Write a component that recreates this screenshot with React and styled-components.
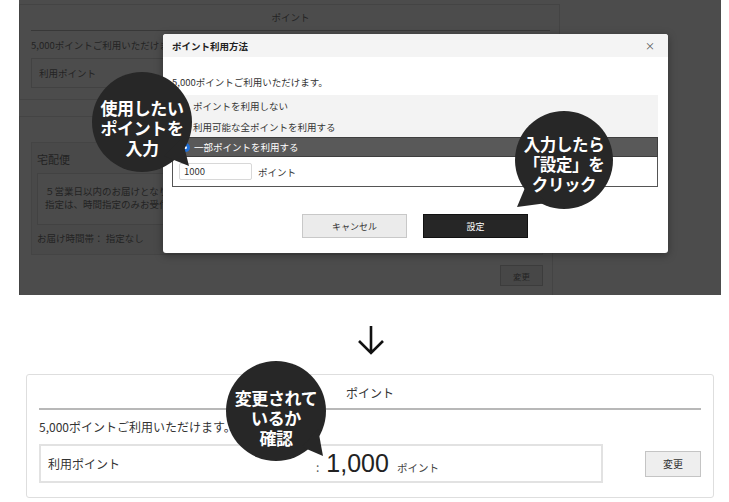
import React from 'react';
import styled, { createGlobalStyle } from 'styled-components';

const GlobalStyle = createGlobalStyle`
  body {
    margin: 0;
    background: #fff;
    font-family: "Noto Sans CJK JP", "Noto Sans", sans-serif;
  }
`;

const Page = styled.div`
  position: relative;
  width: 729px;
  height: 502px;
  overflow: hidden;
  display: flex;
  flex-direction: column;
`;

// ** dimmed screenshot start **
const Shot = styled.div`
  position: relative;
  margin-left: 19px;
  width: 702px;
  height: 295px;
  overflow: hidden;
  background: #fff;
`;

const UnderPage = styled.div`
  display: flex;
  flex-direction: column;
  width: 541px;
  padding-top: 4px;
  color: #777;
  font-size: 9.5px;
`;

const UnderCard = styled.div`
  box-sizing: border-box;
  width: ${(p) => p.$width}px;
  height: ${(p) => p.$height}px;
  margin-top: ${(p) => p.$top}px;
  border: 1px solid #e4e4e4;
  padding: 0 9px 0 11px;
  display: flex;
  flex-direction: column;
`;

const UnderHeading = styled.div`
  height: 25px;
  line-height: 25px;
  text-align: center;
  border-bottom: 1px solid #bdbdbd;
`;

const UnderText = styled.div`
  margin-top: 7px;
  line-height: 14px;
`;

const UnderField = styled.div`
  box-sizing: border-box;
  margin-top: 6px;
  width: 430px;
  height: 30px;
  border: 1px solid #dcdcdc;
  padding-left: 7px;
  display: flex;
  align-items: center;
`;

const DeliveryBox = styled.div`
  box-sizing: border-box;
  margin-top: 25px;
  height: 113px;
  background: #f6f6f6;
  border: 1px solid #e4e4e4;
  padding: 7px 5px 0;
  display: flex;
  flex-direction: column;
`;

const DeliveryTitle = styled.div`
  font-size: 11px;
  line-height: 18px;
`;

const DeliveryNote = styled.div`
  box-sizing: border-box;
  margin-top: 5px;
  height: 52px;
  border: 1px solid #dedede;
  background: #fbfbfb;
  padding: 11px 7px 0;
  line-height: 12.5px;
`;

const DeliveryTime = styled.div`
  margin-top: 6px;
  line-height: 14px;
`;

const UnderButtonRow = styled.div`
  display: flex;
  justify-content: flex-end;
  margin-top: 10px;
`;

const UnderButton = styled.div`
  box-sizing: border-box;
  width: 43px;
  height: 21px;
  border: 1px solid #c8c8c8;
  background: #eee;
  font-size: 8.5px;
  display: grid;
  place-items: center;
`;

const Dim = styled.div`
  position: absolute;
  inset: 0;
  background: rgba(0, 0, 0, 0.7);
`;
// ** dimmed screenshot end **

// ** modal start **
const Modal = styled.div`
  position: absolute;
  left: 144px;
  top: 34px;
  width: 505px;
  height: 219px;
  background: #fff;
  border-radius: 3px;
  box-shadow: 0 2px 8px rgba(0, 0, 0, 0.35);
  font-size: 9.5px;
  color: #333;
  display: flex;
  flex-direction: column;
`;

const ModalHeader = styled.div`
  height: 23px;
  background: #f4f4f4;
  border-radius: 3px 3px 0 0;
  padding: 0 13px 0 9px;
  display: flex;
  align-items: center;
  justify-content: space-between;
  font-weight: 700;
  color: #222;
`;

const Close = styled.span`
  font-weight: 400;
  font-size: 10px;
  color: #555;
`;

const ModalBody = styled.div`
  padding: 18px 10px 0 9px;
  display: flex;
  flex-direction: column;
`;

const ModalText = styled.div`
  line-height: 14px;
`;

const Options = styled.div`
  margin-top: 6px;
  background: #f3f3f3;
  display: flex;
  flex-direction: column;
`;

const Option = styled.div`
  box-sizing: border-box;
  height: ${(p) => (p.$selected ? 20 : 21)}px;
  padding-left: 8px;
  display: flex;
  align-items: center;
  gap: 4px;
  background: ${(p) => (p.$selected ? '#595959' : 'transparent')};
  border: ${(p) => (p.$selected ? '1px solid #3e3e3e' : 'none')};
  color: ${(p) => (p.$selected ? '#fff' : '#333')};
`;

const Radio = styled.span`
  box-sizing: border-box;
  width: 9px;
  height: 9px;
  border-radius: 50%;
  background: ${(p) => (p.$on ? '#fff' : '#fff')};
  border: ${(p) => (p.$on ? '3px solid #1e6fd9' : '1px solid #999')};
`;

const AmountPanel = styled.div`
  box-sizing: border-box;
  height: 30px;
  border: 1px solid #555;
  border-top: none;
  background: #fff;
  padding-left: 6px;
  display: flex;
  align-items: center;
  gap: 6px;
`;

const AmountInput = styled.div`
  box-sizing: border-box;
  width: 73px;
  height: 17px;
  border: 1px solid #d8d8d8;
  border-radius: 2px;
  padding-left: 4px;
  line-height: 15px;
`;

const ModalActions = styled.div`
  margin-top: 27px;
  display: flex;
  justify-content: center;
  gap: 16px;
`;

const ModalButton = styled.div`
  box-sizing: border-box;
  width: 105px;
  height: 24px;
  display: grid;
  place-items: center;
  font-size: 9px;
  background: ${(p) => (p.$primary ? '#262626' : '#ebebeb')};
  border: 1px solid ${(p) => (p.$primary ? '#111' : '#c8c8c8')};
  color: ${(p) => (p.$primary ? '#fff' : '#333')};
`;
// ** modal end **

// ** arrow + result start **
const ArrowRow = styled.div`
  height: 79px;
  display: flex;
  justify-content: center;
  padding-left: 13px;
  padding-top: 30px;
  box-sizing: border-box;
`;

const ResultCard = styled.div`
  box-sizing: border-box;
  margin-left: 26px;
  width: 688px;
  height: 124px;
  border: 1px solid #dedede;
  border-radius: 3px;
  padding: 0 12px;
  display: flex;
  flex-direction: column;
  color: #333;
  font-size: 12px;
`;

const ResultHeading = styled.div`
  height: 33px;
  line-height: 36px;
  text-align: center;
  border-bottom: 2px solid #b8b8b8;
`;

const ResultText = styled.div`
  margin-top: 9px;
  line-height: 16px;
`;

const ResultRow = styled.div`
  margin-top: 9px;
  display: flex;
  align-items: center;
  justify-content: space-between;
`;

const ResultField = styled.div`
  box-sizing: border-box;
  width: 564px;
  height: 39px;
  border: 2px solid #e2e2e2;
  padding-left: 7px;
  display: grid;
  grid-template-columns: 268px auto;
  align-items: center;
`;

const ResultValue = styled.div`
  display: flex;
  align-items: baseline;
  gap: 8px;
`;

const Colon = styled.span`
  font-size: 12px;
  color: #555;
`;

const BigNumber = styled.span`
  font-family: "Liberation Sans", Arial, sans-serif;
  font-size: 25px;
  color: #222;
  margin-left: -1px;
`;

const Unit = styled.span`
  font-size: 10.5px;
  color: #444;
`;

const ChangeButton = styled.div`
  box-sizing: border-box;
  width: 56px;
  height: 26px;
  background: #eeeeee;
  border: 1px solid #c4c4c4;
  display: grid;
  place-items: center;
  font-size: 10px;
`;
// ** arrow + result end **

// ** bubbles start **
const Bubble = styled.div`
  position: absolute;
  left: ${(p) => p.$x}px;
  top: ${(p) => p.$y}px;
  width: ${(p) => p.$size}px;
  height: ${(p) => p.$size}px;
  display: flex;
  flex-direction: column;
  align-items: center;
  justify-content: center;
  padding-top: ${(p) => p.$shift}px;
  box-sizing: border-box;
  color: #fff;
  font-weight: 700;
  font-size: ${(p) => p.$font}px;
  line-height: 20px;
  letter-spacing: -0.4px;

  svg {
    position: absolute;
    inset: 0;
    overflow: visible;
    z-index: -1;
  }
  span {
    position: relative;
    white-space: nowrap;
  }
`;

const SpeechBubble = ({ x, y, size, tail, shift, font = 17, lines }) => (
  <Bubble $x={x} $y={y} $size={size} $shift={shift} $font={font}>
    <svg width={size} height={size} viewBox={`0 0 ${size} ${size}`}>
      <circle cx={size / 2} cy={size / 2} r={size / 2} fill='#272727' />
      <polygon points={tail} fill='#272727' />
    </svg>
    {lines.map((l) => (
      <span key={l}>{l}</span>
    ))}
  </Bubble>
);
// ** bubbles end **

const Layer = styled.div`
  position: absolute;
  inset: 0;
  z-index: 2;
  isolation: isolate;
  pointer-events: none;
`;

const App = () => {
  return (
    <>
      <GlobalStyle />
      <Page>
        <Shot>
          <UnderPage>
            <UnderCard $width={541} $height={96} $top={0}>
              <UnderHeading>ポイント</UnderHeading>
              <UnderText>5,000ポイントご利用いただけます。</UnderText>
              <UnderField>利用ポイント</UnderField>
            </UnderCard>
            <UnderCard $width={534} $height={190} $top={16}>
              <DeliveryBox>
                <DeliveryTitle>宅配便</DeliveryTitle>
                <DeliveryNote>
                  ５営業日以内のお届けとなります。お届け日の
                  <br />
                  指定は、時間指定のみお受付いたします。
                </DeliveryNote>
                <DeliveryTime>お届け時間帯： 指定なし</DeliveryTime>
              </DeliveryBox>
              <UnderButtonRow>
                <UnderButton>変更</UnderButton>
              </UnderButtonRow>
            </UnderCard>
          </UnderPage>
          <Dim />

          {/* modal */}
          <Modal>
            <ModalHeader>
              ポイント利用方法
              <Close>×</Close>
            </ModalHeader>
            <ModalBody>
              <ModalText>5,000ポイントご利用いただけます。</ModalText>
              <Options>
                <Option>
                  <Radio />
                  ポイントを利用しない
                </Option>
                <Option>
                  <Radio />
                  利用可能な全ポイントを利用する
                </Option>
                <Option $selected>
                  <Radio $on />
                  一部ポイントを利用する
                </Option>
              </Options>
              <AmountPanel>
                <AmountInput>1000</AmountInput>
                ポイント
              </AmountPanel>
              <ModalActions>
                <ModalButton>キャンセル</ModalButton>
                <ModalButton $primary>設定</ModalButton>
              </ModalActions>
            </ModalBody>
          </Modal>
        </Shot>

        <ArrowRow>
          <svg width='28' height='30' viewBox='0 0 28 30'>
            <path d='M14 1 V28 M2 16 L14 28 L26 16' fill='none' stroke='#111' strokeWidth='2.6' />
          </svg>
        </ArrowRow>

        <ResultCard>
          <ResultHeading>ポイント</ResultHeading>
          <ResultText>5,000ポイントご利用いただけます。</ResultText>
          <ResultRow>
            <ResultField>
              <span>利用ポイント</span>
              <ResultValue>
                <Colon>:</Colon>
                <BigNumber>1,000</BigNumber>
                <Unit>ポイント</Unit>
              </ResultValue>
            </ResultField>
            <ChangeButton>変更</ChangeButton>
          </ResultRow>
        </ResultCard>

        <Layer>
          <SpeechBubble
            x={92}
            y={72}
            size={100}
            shift={12}
            tail='72,84 90,66 97,94'
            lines={['使用したい', 'ポイントを', '入力']}
          />
          <SpeechBubble
            x={515}
            y={111}
            size={98}
            shift={8}
            font={16.5}
            tail='12,72 32,92 2,96'
            lines={['入力したら', '「設定」を', 'クリック']}
          />
          <SpeechBubble
            x={226}
            y={361}
            size={100}
            shift={14}
            tail='76,86 92,68 97,95'
            lines={['変更されて', 'いるか', '確認']}
          />
        </Layer>
      </Page>
    </>
  );
};

export default App;
